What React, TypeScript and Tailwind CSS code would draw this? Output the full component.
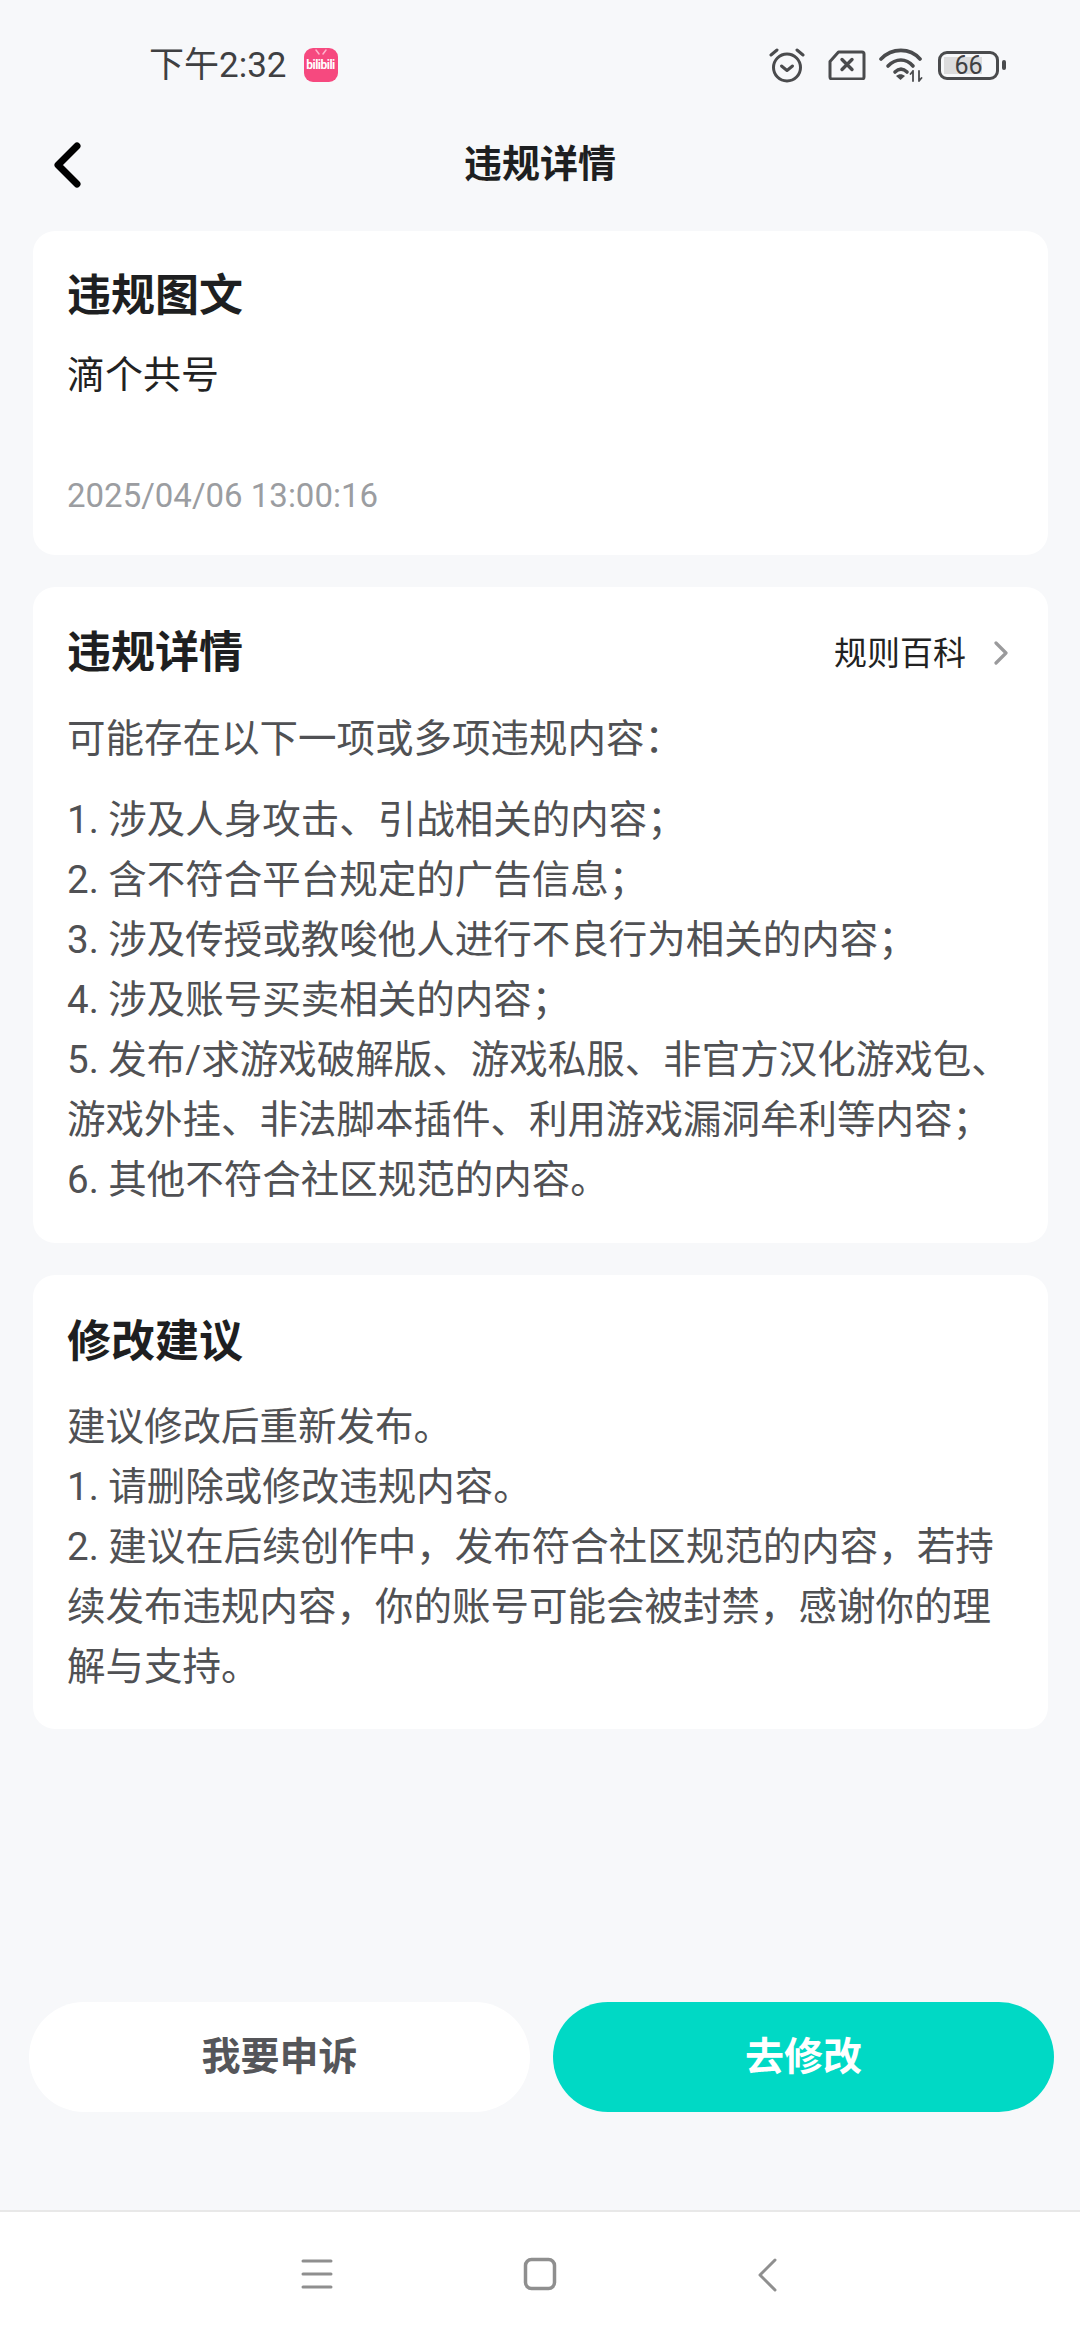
import React from "react";

const cjk = "font-['Roboto','Noto_Sans_CJK_SC',sans-serif]";

function Alarm() {
  return (
    <svg width="36" height="36" viewBox="0 0 36 36" fill="none" stroke="#4a4b4d" strokeWidth="3" strokeLinecap="round" strokeLinejoin="round">
      <circle cx="18" cy="20.500" r="13.500" />
      <path d="M12.500 19l5.500 4.500 5.500-4.500" />
      <path d="M2 8l6-5M34 8l-6-5" />
    </svg>
  );
}
function Sim() {
  return (
    <svg width="38" height="30" viewBox="0 0 38 30" fill="none" stroke="#4a4b4d" strokeLinecap="round" strokeLinejoin="round">
      <path strokeWidth="3" d="M2 11.500L10.500 2H34a2 2 0 0 1 2 2v23a2 2 0 0 1-2 2H4a2 2 0 0 1-2-2z" />
      <path strokeWidth="3.400" d="M14 9.500l10 10M24 9.500l-10 10" />
    </svg>
  );
}
function Wifi() {
  return (
    <svg width="46" height="34" viewBox="0 0 46 34" fill="none" strokeLinecap="round">
      <path d="M2 11C13 -0.500 31 -0.500 41 11" stroke="#4a4b4d" strokeWidth="3.600" />
      <path d="M9 18c8-8 18-8 25 0" stroke="#4a4b4d" strokeWidth="3.600" />
      <path d="M16 24c4-4 8-4 12 0" stroke="#4a4b4d" strokeWidth="3.600" />
      <path d="M21.500 32l-4.500-4c3-2.500 6-2.500 9 0z" fill="#4a4b4d" />
      <path d="M34 23v10M31.500 26l2.500-3M40 23v10M42.500 30l-2.500 3" stroke="#4a4b4d" strokeWidth="1.800" />
    </svg>
  );
}

function Card({ children, className }: { children: React.ReactNode; className: string }) {
  return <section className={`bg-white rounded-[22px] px-[34px] ${className}`}>{children}</section>;
}

export default function App() {
  return (
    <div className={`${cjk} w-[1080px] h-[2340px] bg-[#f7f8fa] flex flex-col overflow-hidden`}>
      <header className="h-[130px] shrink-0 flex items-center pl-[149px] pr-[74px] text-[#3f4042]">
        <span className="text-[35px] leading-none">下午2:32</span>
        <span className="ml-[17px] w-[34px] h-[34px] rounded-[9px] bg-[#f6497f] flex items-center justify-center text-white text-[12px] tracking-[-0.5px] font-bold leading-none relative">
          <svg className="absolute left-[10px] top-[1px]" width="14" height="7" viewBox="0 0 14 7" fill="none" stroke="#ffb3cc" strokeWidth="1.500" strokeLinecap="round">
            <path d="M2 1l3 4M12 1L9 5" />
          </svg>
          bilibili
        </span>
        <div className="ml-auto flex items-center">
          <Alarm />
          <span className="ml-[23px] flex"><Sim /></span>
          <span className="ml-[13px] flex"><Wifi /></span>
          <span className="ml-[13px] w-[61px] h-[29px] rounded-[9px] border-[3.500px] border-[#4a4b4d] flex items-center justify-center text-[25px] leading-none relative">
            <span className="absolute left-[3px] top-[3px] bottom-[3px] w-[38px] bg-[#dcdcdd]" />
            <span className="relative">66</span>
          </span>
          <span className="ml-[3px] w-[4px] h-[10px] rounded-[2px] bg-[#4a4b4d]" />
        </div>
      </header>

      <nav className="h-[101px] shrink-0 relative flex items-center justify-center">
        <svg className="absolute left-[53px] top-[12px]" width="28" height="46" viewBox="0 0 28 46" fill="none" stroke="#000" strokeWidth="7" strokeLinecap="round" strokeLinejoin="round">
          <path d="M24 4L5 23l19 19" />
        </svg>
        <h1 className="text-[38px] leading-none font-bold text-[#1e1f21] pb-[34px]">违规详情</h1>
      </nav>

      <main className="flex flex-col gap-[32px] pl-[33px] pr-[32px]">
        <Card className="h-[324px] pt-[37px]">
          <h2 className="text-[44px] leading-[56px] font-bold text-[#1e1f21]">违规图文</h2>
          <p className="mt-[26px] text-[38px] leading-[50px] text-[#222]">滴个共号</p>
          <p className="mt-[76px] text-[33px] leading-[40px] text-[#9b9da1]">2025/04/06 13:00:16</p>
        </Card>

        <Card className="h-[656px] pt-[38px]">
          <div className="flex items-center justify-between">
            <h2 className="text-[44px] leading-[56px] font-bold text-[#1e1f21]">违规详情</h2>
            <div className="flex items-center mr-[5px]">
              <span className="text-[33px] leading-none text-[#222]">规则百科</span>
              <svg className="ml-[27px]" width="16" height="24" viewBox="0 0 16 24" fill="none" stroke="#9a9a9c" strokeWidth="3.200" strokeLinecap="round" strokeLinejoin="round">
                <path d="M3 2l10 10L3 22" />
              </svg>
            </div>
          </div>
          <p className="mt-[28px] text-[38.500px] leading-[60px] text-[#505154]">可能存在以下一项或多项违规内容：</p>
          <div className="mt-[21px] text-[38.500px] leading-[60px] text-[#505154]">
            <p>1. 涉及人身攻击、引战相关的内容；</p>
            <p>2. 含不符合平台规定的广告信息；</p>
            <p>3. 涉及传授或教唆他人进行不良行为相关的内容；</p>
            <p>4. 涉及账号买卖相关的内容；</p>
            <p>5. 发布/求游戏破解版、游戏私服、非官方汉化游戏包、</p>
            <p>游戏外挂、非法脚本插件、利用游戏漏洞牟利等内容；</p>
            <p>6. 其他不符合社区规范的内容。</p>
          </div>
        </Card>

        <Card className="h-[454px] pt-[39px]">
          <h2 className="text-[44px] leading-[56px] font-bold text-[#1e1f21]">修改建议</h2>
          <div className="mt-[27px] text-[38.500px] leading-[60px] text-[#505154]">
            <p>建议修改后重新发布。</p>
            <p>1. 请删除或修改违规内容。</p>
            <p>2. 建议在后续创作中，发布符合社区规范的内容，若持</p>
            <p>续发布违规内容，你的账号可能会被封禁，感谢你的理</p>
            <p>解与支持。</p>
          </div>
        </Card>
      </main>

      <div className="mt-auto flex gap-[23px] pl-[29px] pr-[26px]">
        <button className="flex-1 h-[110px] rounded-full bg-white text-[39px] font-bold text-[#55565a]">我要申诉</button>
        <button className="flex-1 h-[110px] rounded-full bg-[#00d9c5] text-[39px] font-bold text-white">去修改</button>
      </div>

      <footer className="mt-[98px] h-[130px] shrink-0 bg-white border-t-2 border-[#e8e8e8] flex items-center relative">
        <svg className="absolute left-[300px] top-[46px]" width="34" height="32" viewBox="0 0 34 32" fill="none" stroke="#8f8f8f" strokeWidth="3" strokeLinecap="round">
          <path d="M3 3h28M3 16h28M3 29h28" />
        </svg>
        <svg className="absolute left-[523px] top-[45px]" width="34" height="34" viewBox="0 0 34 34" fill="none" stroke="#8f8f8f" strokeWidth="3.500">
          <rect x="2.500" y="2.500" width="29" height="29" rx="6" />
        </svg>
        <svg className="absolute left-[756px] top-[45px]" width="22" height="36" viewBox="0 0 22 36" fill="none" stroke="#8f8f8f" strokeWidth="3" strokeLinecap="round" strokeLinejoin="round">
          <path d="M19 3L4 18l15 15" />
        </svg>
      </footer>
    </div>
  );
}
